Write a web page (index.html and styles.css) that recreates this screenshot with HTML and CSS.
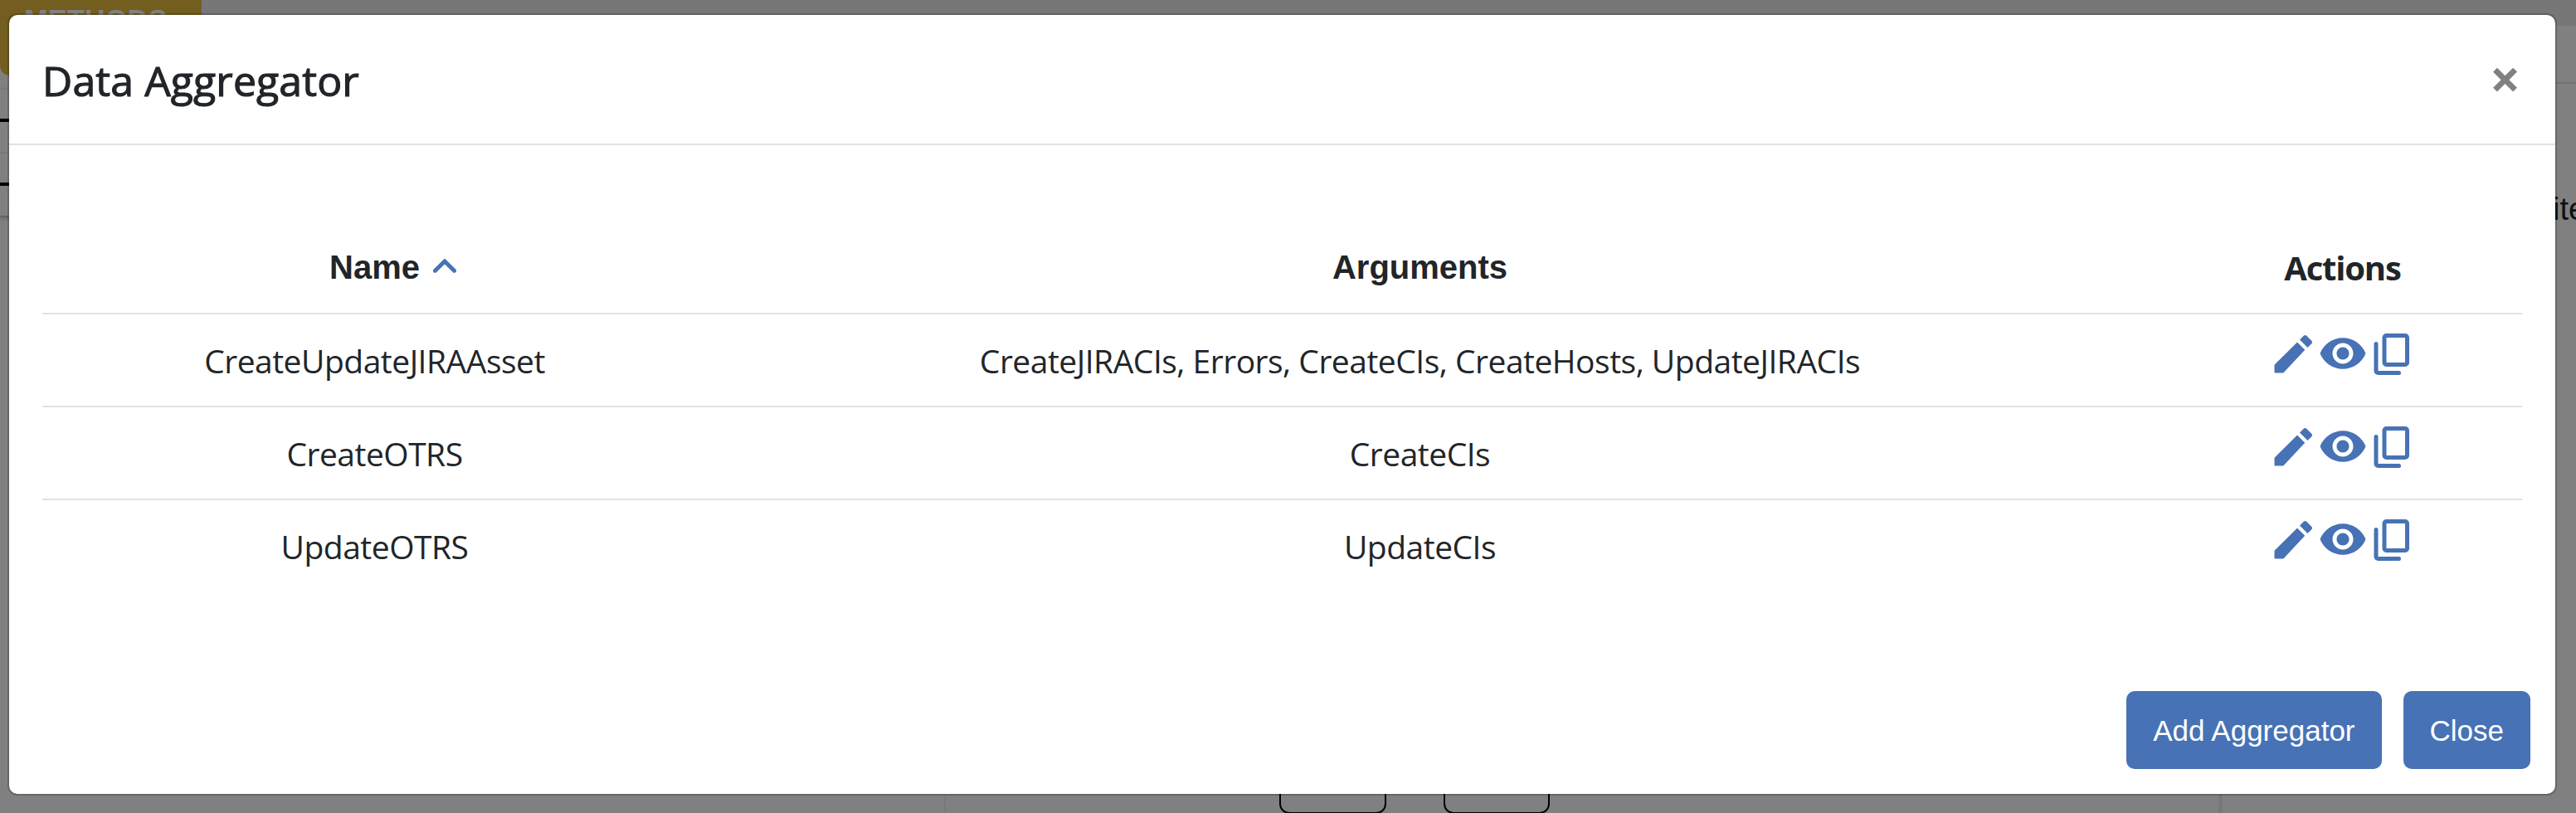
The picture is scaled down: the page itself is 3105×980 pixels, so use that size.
FILE: index.html
```html
<!DOCTYPE html>
<html lang="en">
<head>
<meta charset="utf-8">
<title>Data Aggregator</title>
<link rel="stylesheet" href="styles.css">
</head>
<body>
<svg class="sprite" aria-hidden="true">
  <symbol id="edit" viewBox="0 0 24 24"><path d="M3 17.7v3.3c0 .2.2.4.4.4h3.6c.1 0 .3 0 .4-.1L17.7 10.300 14 6.600 3.200 17.300c-.1.1-.2.2-.2.4zM20.900 7.300c.4-.4.4-1 0-1.400l-2.400-2.400c-.4-.4-1-.4-1.400 0L15.200 5.400l3.800 3.800z"/></symbol>
  <symbol id="eye" viewBox="0 0 24 24"><path d="M12 4.500C7 4.500 2.730 7.610 1 12c1.730 4.390 6 7.500 11 7.500s9.270-3.110 11-7.500c-1.730-4.390-6-7.500-11-7.500zM12 17c-2.760 0-5-2.240-5-5s2.240-5 5-5 5 2.240 5 5-2.240 5-5 5zm0-8c-1.660 0-3 1.340-3 3s1.340 3 3 3 3-1.340 3-3-1.340-3-3-3z"/></symbol>
  <symbol id="copy" viewBox="0 0 24 24"><g fill="none" stroke="currentColor" stroke-width="2"><rect x="8" y="3.400" width="11" height="14" rx="1"/><path d="M4 7.400V20.400a1 1 0 0 0 1 1H15" stroke-linecap="round"/></g></symbol>
</svg>
<div class="page">
  <div class="topbar"></div>
  <div class="methods">METHODS</div>
  <div class="side-left"></div>
  <div class="side-rule"></div>
  <div class="side-text">ite</div>
  <div class="panel-edge edge-a"></div>
  <div class="panel-edge edge-b"></div>
  <div class="node node-a"></div>
  <div class="node node-b"></div>
</div>
<div class="backdrop">
  <section class="modal">
    <header class="modal-header">
      <h1 class="title"><span>Data Aggregator</span></h1>
      <button class="dismiss">×</button>
    </header>
    <div class="modal-body">
      <div class="row head">
        <div class="cell name-head"><span>Name</span><svg class="caret" viewBox="0 0 28 17"><path d="M2.500 14.300 14 3l11.500 11.300"/></svg></div>
        <div class="cell"><span>Arguments</span></div>
        <div class="cell actions actions-head"><span>Actions</span></div>
      </div>
      <div class="row">
        <div class="cell"><span>CreateUpdateJIRAAsset</span></div>
        <div class="cell"><span>CreateJIRACIs, Errors, CreateCIs, CreateHosts, UpdateJIRACIs</span></div>
        <div class="cell actions"><svg class="icon"><use href="#edit"/></svg><svg class="icon"><use href="#eye"/></svg><svg class="icon"><use href="#copy"/></svg></div>
      </div>
      <div class="row">
        <div class="cell"><span>CreateOTRS</span></div>
        <div class="cell"><span>CreateCIs</span></div>
        <div class="cell actions"><svg class="icon"><use href="#edit"/></svg><svg class="icon"><use href="#eye"/></svg><svg class="icon"><use href="#copy"/></svg></div>
      </div>
      <div class="row">
        <div class="cell"><span>UpdateOTRS</span></div>
        <div class="cell"><span>UpdateCIs</span></div>
        <div class="cell actions"><svg class="icon"><use href="#edit"/></svg><svg class="icon"><use href="#eye"/></svg><svg class="icon"><use href="#copy"/></svg></div>
      </div>
    </div>
    <footer class="modal-footer">
      <button class="btn">Add Aggregator</button>
      <button class="btn">Close</button>
    </footer>
  </section>
</div>
</body>
</html>
```

FILE: styles.css
```css
* { box-sizing: border-box; }
body { margin: 0; width: 3105px; height: 980px; overflow: hidden; background: #808080; color: #212529; font-family: "Open Sans", "Noto Sans", sans-serif; }
button { border: 0; margin: 0; padding: 0; background: none; font: inherit; }
.sprite { position: absolute; width: 0; height: 0; }

/* dimmed page, visible around the modal */
.page { position: absolute; inset: 0; overflow: hidden; }
.topbar { height: 31px; background: #777; }
.methods { position: absolute; left: 0; top: 0; width: 243px; height: 91px; padding: 6px 0 0 29px; border-radius: 0 0 12px 12px; background: #735e20; color: #808080; font: bold 34.500px/36px "Liberation Sans", Arial, sans-serif; }
.side-left { position: absolute; left: 0; top: 107px; width: 40px; height: 154px; border-top: 1px solid #797979; border-bottom: 1px solid #606060; background: linear-gradient(#000, #000) 0 35px / 100% 4px no-repeat, linear-gradient(#787878, #787878) 0 75px / 100% 2px no-repeat, linear-gradient(#000, #000) 0 112px / 100% 4px no-repeat; box-shadow: 0 2px 5px rgba(0,0,0,.25); }
.side-rule { position: absolute; right: 0; top: 99px; width: 40px; height: 2px; background: #737373; }
.side-text { position: absolute; left: 3077px; top: 230px; color: #111; font: 38px/44px "Liberation Sans", Arial, sans-serif; }
.panel-edge { position: absolute; top: 900px; height: 80px; background: #7a7a7a; }
.edge-a { left: 1138px; width: 2px; }
.edge-b { left: 2674px; width: 5px; background: #777; }
.node { position: absolute; top: 900px; width: 129px; height: 81px; border: 2px solid #000; border-radius: 12px; }
.node-a { left: 1542px; }
.node-b { left: 1740px; width: 128px; }

.backdrop { position: relative; padding: 16px 0 0 9px; }
.modal { display: flex; flex-direction: column; width: 3073px; height: 943px; border: 2px solid rgba(0,0,0,.2); border-radius: 12px; background: #fff; background-clip: padding-box; }
.modal-header { display: flex; justify-content: space-between; align-items: flex-start; height: 157px; padding: 43px 43px 0 40px; border-bottom: 2px solid #dee2e6; }
.title { margin: 0; font-size: 50px; font-weight: 500; line-height: 72px; letter-spacing: .1px; -webkit-text-stroke: 1.100px #212529; }
.dismiss { width: 36px; color: #808080; font-weight: 700; font-size: 65px; line-height: 66px; }
.modal-body { flex: 1; padding: 92px 40px 0; }
.row { display: grid; grid-template-columns: 801px 1719px 469px; height: 112px; border-top: 2px solid #dee2e6; font-size: 39px; }
.head { height: 110px; border-top: 0; font: bold 40px/46px "Liberation Sans", Arial, sans-serif; }
.cell { padding-top: 28px; text-align: center; line-height: 56px; letter-spacing: -.5px; white-space: nowrap; }
.head .cell { padding-top: 27px; letter-spacing: 0; }
.name-head { display: flex; justify-content: center; padding-left: 44px; }
.caret { width: 28px; height: 17px; margin: 18px 0 0 16px; fill: none; stroke: #4772b5; stroke-width: 5; stroke-linecap: round; }
.actions { display: flex; justify-content: center; padding: 17px 0 0 36px; }
.head .actions-head { padding-top: 28px; font-family: "Open Sans", sans-serif; letter-spacing: -1.200px; }
.icon { width: 60px; height: 60px; fill: #4772b5; color: #4772b5; }
.modal-footer { display: flex; justify-content: flex-end; gap: 26px; padding: 0 30px 30px; }
.btn { height: 94px; padding: 2px 32px 0; border-radius: 10px; background: #4772b5; color: #fff; font: 35px/92px "Liberation Sans", Arial, sans-serif; }
```
